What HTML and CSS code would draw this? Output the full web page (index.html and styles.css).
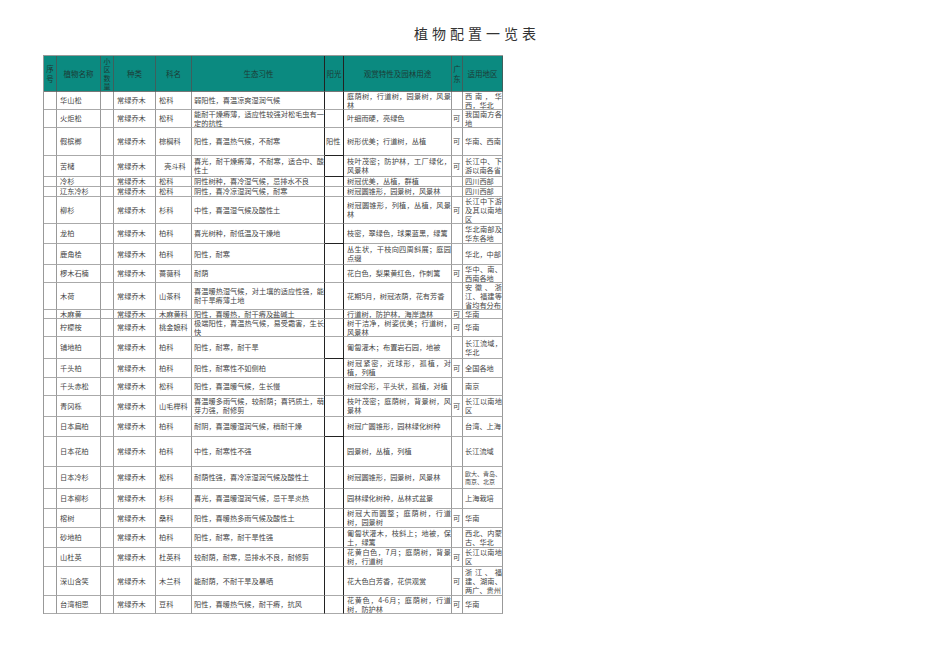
FILE: index.html
```html
<!DOCTYPE html>
<html lang="zh-CN">
<head>
<meta charset="utf-8">
<title>植物配置一览表</title>
<link rel="stylesheet" href="styles.css">
</head>
<body>
<h1 class="title">植物配置一览表</h1>
<div class="sheet">
  <div class="h">序号</div><div class="h">植物名称</div><div class="h qty">小区数量</div><div class="h">种类</div><div class="h">科名</div><div class="h eco">生态习性</div><div class="h sun">阳光</div><div class="h">观赏特性及园林用途</div><div class="h">广东</div><div class="h">适用地区</div>

  <div></div><div>华山松</div><div></div><div>常绿乔木</div><div>松科</div><div class="eco">弱阳性，喜温凉爽湿润气候</div><div class="sun"></div><div>庭荫树，行道树，园景树，风景林</div><div class="gd"></div><div class="rg">西南，华西，华北</div>
  <div></div><div>火炬松</div><div></div><div>常绿乔木</div><div>松科</div><div class="eco">能耐干燥瘠薄，适应性较强对松毛虫有一定的抗性</div><div class="sun"></div><div>叶细而硬，亮绿色</div><div class="gd">可</div><div class="rg">我国南方各地</div>
  <div></div><div>假槟榔</div><div></div><div>常绿乔木</div><div>棕榈科</div><div class="eco">阳性，喜温热气候，不耐寒</div><div class="sun bk">阳性</div><div>树形优美；行道树，丛植</div><div class="gd">可</div><div class="rg">华南、西南</div>
  <div></div><div>苦槠</div><div></div><div>常绿乔木</div><div class="ctr">壳斗科</div><div class="eco">喜光，耐干燥瘠薄，不耐寒，适合中、酸性土</div><div class="sun bk"></div><div>枝叶茂密；防护林，工厂绿化，风景林</div><div class="gd">可</div><div class="rg">长江中、下游以南各省</div>
  <div></div><div>冷杉</div><div></div><div>常绿乔木</div><div>松科</div><div class="eco">阴性树种，喜冷湿气候，忌排水不良</div><div class="sun"></div><div>树冠优美，丛植，群植</div><div class="gd"></div><div class="rg">四川西部</div>
  <div></div><div>辽东冷杉</div><div></div><div>常绿乔木</div><div>松科</div><div class="eco">阴性，喜冷凉湿润气候，耐寒</div><div class="sun"></div><div>树冠圆锥形，园景树，风景林</div><div class="gd"></div><div class="rg">四川西部</div>
  <div></div><div>柳杉</div><div></div><div>常绿乔木</div><div>杉科</div><div class="eco">中性，喜温湿气候及酸性土</div><div class="sun"></div><div>树冠圆锥形，列植，丛植，风景林</div><div class="gd">可</div><div class="rg">长江中下游及其以南地区</div>
  <div></div><div>龙柏</div><div></div><div>常绿乔木</div><div>柏科</div><div class="eco">喜光树种，耐低温及干燥地</div><div class="sun bk"></div><div>枝密，翠绿色，球果蓝黑，绿篱</div><div class="gd"></div><div class="rg">华北南部及华东各地</div>
  <div></div><div>鹿角桧</div><div></div><div>常绿乔木</div><div>柏科</div><div class="eco">阳性，耐寒</div><div class="sun"></div><div>丛生状，干枝向四周斜展；庭园点缀</div><div class="gd"></div><div class="rg">华北，中部</div>
  <div></div><div>椤木石楠</div><div></div><div>常绿乔木</div><div>蔷薇科</div><div class="eco">耐荫</div><div class="sun"></div><div>花白色，梨果黄红色，作刺篱</div><div class="gd">可</div><div class="rg">华中、南、西南各地</div>
  <div></div><div>木荷</div><div></div><div>常绿乔木</div><div>山茶科</div><div class="eco">喜温暖热湿气候，对土壤的适应性强，能耐干旱瘠薄土地</div><div class="sun"></div><div>花期5月，树冠浓荫，花有芳香</div><div class="gd"></div><div class="rg">安徽、浙江、福建等省均有分布</div>
  <div></div><div>木麻黄</div><div></div><div>常绿乔木</div><div>木麻黄科</div><div class="eco">阳性，喜暖热，耐干瘠及盐碱土</div><div class="sun"></div><div>行道树，防护林，海岸造林</div><div class="gd">可</div><div class="rg">华南</div>
  <div></div><div>柠檬桉</div><div></div><div>常绿乔木</div><div>桃金娘科</div><div class="eco">极端阳性，喜温热气候，易受霜害，生长快</div><div class="sun"></div><div>树干洁净，树姿优美；行道树，风景林</div><div class="gd">可</div><div class="rg">华南</div>
  <div></div><div>铺地柏</div><div></div><div>常绿乔木</div><div>柏科</div><div class="eco">阳性，耐寒，耐干旱</div><div class="sun bk"></div><div>匍匐灌木；布置岩石园，地被</div><div class="gd"></div><div class="rg">长江流域，华北</div>
  <div></div><div>千头柏</div><div></div><div>常绿乔木</div><div>柏科</div><div class="eco">阳性，耐寒性不如侧柏</div><div class="sun"></div><div>树冠紧密，近球形，孤植，对植，列植</div><div class="gd">可</div><div class="rg">全国各地</div>
  <div></div><div>千头赤松</div><div></div><div>常绿乔木</div><div>松科</div><div class="eco">阳性，喜温暖气候，生长慢</div><div class="sun"></div><div>树冠伞形，平头状，孤植，对植</div><div class="gd"></div><div class="rg">南京</div>
  <div></div><div>青冈栎</div><div></div><div>常绿乔木</div><div>山毛榉科</div><div class="eco">喜温暖多雨气候，较耐荫；喜钙质土，萌芽力强，耐修剪</div><div class="sun"></div><div>枝叶茂密；庭荫树，背景树，风景林</div><div class="gd">可</div><div class="rg">长江以南地区</div>
  <div></div><div>日本扁柏</div><div></div><div>常绿乔木</div><div>柏科</div><div class="eco">耐阴，喜温暖湿润气候，稍耐干燥</div><div class="sun bk"></div><div>树冠广圆锥形，园林绿化树种</div><div class="gd"></div><div class="rg">台湾、上海</div>
  <div></div><div>日本花柏</div><div></div><div>常绿乔木</div><div>柏科</div><div class="eco">中性，耐寒性不强</div><div class="sun"></div><div>园景树，丛植，列植</div><div class="gd"></div><div class="rg">长江流域</div>
  <div></div><div>日本冷杉</div><div></div><div>常绿乔木</div><div>松科</div><div class="eco">耐荫性强，喜冷凉湿润气候及酸性土</div><div class="sun"></div><div>树冠圆锥形，园景树，风景林</div><div class="gd"></div><div class="rg tight">欧大、青岛、南京、北京</div>
  <div></div><div>日本柳杉</div><div></div><div>常绿乔木</div><div>杉科</div><div class="eco">喜光，喜温暖湿润气候，忌干旱炎热</div><div class="sun"></div><div>园林绿化树种，丛林式盆景</div><div class="gd"></div><div class="rg">上海栽培</div>
  <div></div><div>榕树</div><div></div><div>常绿乔木</div><div>桑科</div><div class="eco">阳性，喜暖热多雨气候及酸性土</div><div class="sun"></div><div>树冠大而圆整；庭荫树，行道树，园景树</div><div class="gd">可</div><div class="rg">华南</div>
  <div></div><div>砂地柏</div><div></div><div>常绿乔木</div><div>柏科</div><div class="eco">阳性，耐寒，耐干旱性强</div><div class="sun"></div><div>匍匐状灌木，枝斜上；地被，保土，绿篱</div><div class="gd"></div><div class="rg">西北、内蒙古、华北</div>
  <div></div><div>山杜英</div><div></div><div>常绿乔木</div><div>杜英科</div><div class="eco">较耐荫，耐寒，忌排水不良，耐修剪</div><div class="sun"></div><div>花黄白色，7月；庭荫树，背景树，行道树</div><div class="gd">可</div><div class="rg">长江以南地区</div>
  <div></div><div>深山含笑</div><div></div><div>常绿乔木</div><div>木兰科</div><div class="eco">能耐荫，不耐干旱及暴晒</div><div class="sun"></div><div>花大色白芳香，花供观赏</div><div class="gd">可</div><div class="rg">浙江、福建、湖南、两广、贵州</div>
  <div></div><div>台湾相思</div><div></div><div>常绿乔木</div><div>豆科</div><div class="eco">阳性，喜暖热气候，耐干瘠，抗风</div><div class="sun"></div><div>花黄色，4-6月；庭荫树，行道树，防护林</div><div class="gd">可</div><div class="rg">华南</div>
</div>
</body>
</html>
```

FILE: styles.css
```css
* { box-sizing: border-box; }

body {
  margin: 0;
  background: #ffffff;
  font-family: "Noto Sans CJK SC", "Noto Sans", sans-serif;
  color: #444;
}

.title {
  margin: 0;
  height: 55px;
  padding-top: 25px;
  font-size: 14px;
  line-height: 16px;
  font-weight: normal;
  text-align: center;
  letter-spacing: 4px;
  text-indent: 4px;
  color: #333;
}

.sheet {
  display: grid;
  margin-left: 43px;
  width: 460px;
  grid-template-columns: 13px 44px 13px 42px 36px 133px 19px 108px 11px 40px;
  grid-template-rows: 36px 18px 18px 28px 21px 10px 10px 27px 20px 21px 18px 27px 9px 18px 22px 19px 18px 21px 20px 30px 22px 20px 19px 20px 19px 29px 18px;
  border-left: 1px solid #999;
  border-top: 1px solid #999;
}

.sheet > div {
  border-right: 1px solid #999;
  border-bottom: 1px solid #aaa;
  overflow: hidden;
  display: flex;
  align-items: center;
  padding: 0 0 0 3px;
  font-size: 7.2px;
  line-height: 9px;
  text-align: justify;
}

.sheet > .h {
  background: #0b8a80;
  color: #1d3a36;
  justify-content: center;
  text-align: center;
  padding: 0 1px;
  font-size: 7.5px;
  line-height: 10px;
  border-right-color: #3f5f5c;
  border-bottom-color: #777;
}

.sheet > .qty {
  font-size: 7px;
  line-height: 8.5px;
}

.sheet > .eco {
  padding-left: 2px;
  border-right: 1px solid #222;
}

.sheet > .sun {
  border-right: 1px solid #222;
  padding-left: 1px;
}

.sheet > .bk {
  border-bottom-color: #222;
}

.sheet > .gd {
  padding-left: 1px;
}

.sheet > .rg {
  padding-left: 2px;
}

.sheet > .tight {
  font-size: 6px;
  line-height: 8px;
  text-align: left;
}

.sheet > .ctr {
  justify-content: center;
}
```
